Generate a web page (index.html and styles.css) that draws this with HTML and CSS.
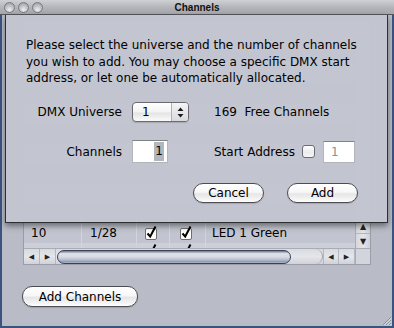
FILE: index.html
```html
<!DOCTYPE html>
<html>
<head>
<meta charset="utf-8">
<link rel="stylesheet" href="styles.css">
</head>
<body>
<div class="window">
  <div class="titlebar">
    <div class="lights"><span class="light"></span><span class="light"></span><span class="light"></span></div>
    <div class="title">Channels</div>
    <div></div>
  </div>
  <div class="body">
    <div class="table">
      <div class="table-main">
        <div class="rows">
          <div class="row head"><span class="c1"></span><span class="c2"></span><span class="c3"></span><span class="c4"></span><span class="c5"></span></div>
          <div class="row"><span class="c1"></span><span class="c2"></span><span class="c3"></span><span class="c4"></span><span class="c5"></span></div>
          <div class="row alt"><span class="c1"></span><span class="c2"></span><span class="c3"></span><span class="c4"></span><span class="c5"></span></div>
          <div class="row"><span class="c1"></span><span class="c2"></span><span class="c3"></span><span class="c4"></span><span class="c5"></span></div>
          <div class="row alt"><span class="c1"></span><span class="c2"></span><span class="c3"></span><span class="c4"></span><span class="c5"></span></div>
          <div class="row"><span class="c1"></span><span class="c2"></span><span class="c3"></span><span class="c4"></span><span class="c5"></span></div>
          <div class="row alt"><span class="c1"></span><span class="c2"></span><span class="c3"></span><span class="c4"></span><span class="c5"></span></div>
          <div class="row"><span class="c1"></span><span class="c2"></span><span class="c3"></span><span class="c4"></span><span class="c5"></span></div>
          <div class="row alt"><span class="c1"></span><span class="c2"></span><span class="c3"></span><span class="c4"></span><span class="c5"></span></div>
          <div class="row"><span class="c1"></span><span class="c2"></span><span class="c3"></span><span class="c4"></span><span class="c5"></span></div>
          <div class="row"><span class="c1">10</span><span class="c2">1/28</span><span class="c3"><svg class="chk" width="14" height="15" viewBox="0 0 14 15"><rect x="1.5" y="3.5" width="11" height="11" rx="1.5" fill="#fdfdfd" stroke="#6e6e6e"/><path d="M3.5 8.5 L6.2 11.5 L11.5 1.5" fill="none" stroke="#000" stroke-width="2"/></svg></span><span class="c4"><svg class="chk" width="14" height="15" viewBox="0 0 14 15"><rect x="1.5" y="3.5" width="11" height="11" rx="1.5" fill="#fdfdfd" stroke="#6e6e6e"/><path d="M3.5 8.5 L6.2 11.5 L11.5 1.5" fill="none" stroke="#000" stroke-width="2"/></svg></span><span class="c5">LED 1 Green</span></div>
          <div class="stub"><div class="row alt"><span class="c1"></span><span class="c2"></span><span class="c3"><svg class="chk" width="14" height="15" viewBox="0 0 14 15"><path d="M3.5 8.5 L6.2 11.5 L11.5 1.5" fill="none" stroke="#000" stroke-width="2"/></svg></span><span class="c4"><svg class="chk" width="14" height="15" viewBox="0 0 14 15"><path d="M3.5 8.5 L6.2 11.5 L11.5 1.5" fill="none" stroke="#000" stroke-width="2"/></svg></span><span class="c5"></span></div></div>
        </div>
        <div class="hscroll">
          <span class="sbtn">&#9664;</span><span class="sbtn">&#9654;</span>
          <div class="htrack"><div class="thumb"></div><div class="trackcap"></div></div>
          <span class="sbtn">&#9664;</span><span class="sbtn">&#9654;</span>
        </div>
      </div>
      <div class="vscroll">
        <div class="vtrack"></div>
        <span class="vbtn">&#9650;</span>
        <span class="vbtn">&#9660;</span>
        <div class="corner"></div>
      </div>
    </div>
    <div class="bottom">
      <button class="btn wide">Add Channels</button>
    </div>
    <svg class="grip" width="12" height="12" viewBox="0 0 12 12"><path d="M11 3 L3 11 M11 6 L6 11 M11 9 L9 11" stroke="#8a8d96" stroke-width="1"/><path d="M11.5 4 L4 11.5 M11.5 7 L7 11.5 M11.5 10 L10 11.5" stroke="#e4e6ec" stroke-width="1"/></svg>
  </div>

  <div class="sheet">
    <p class="msg">Please select the universe and the number of channels you wish to add. You may choose a specific DMX start address, or let one be automatically allocated.</p>
    <div class="form">
      <label class="lbl">DMX Universe</label>
      <div class="popup"><span class="pval">1</span><span class="pstep"><svg width="7" height="11" viewBox="0 0 7 11"><path d="M3.5 0.5 L6.5 4 L0.5 4 Z M0.5 7 L6.5 7 L3.5 10.5 Z" fill="#1a1a1a"/></svg></span></div>
      <div class="free">169  Free Channels</div>
      <label class="lbl">Channels</label>
      <div class="field num"><span class="sel">1</span></div>
      <div class="start">
        <span>Start Address</span>
        <span class="check"></span>
        <span class="field dis">1</span>
      </div>
    </div>
    <div class="actions">
      <button class="btn">Cancel</button>
      <button class="btn">Add</button>
    </div>
  </div>
</div>
</body>
</html>
```

FILE: styles.css
```css
* { box-sizing: border-box; }
html, body { margin: 0; padding: 0; }
body {
  width: 394px;
  height: 328px;
  overflow: hidden;
  font-family: "DejaVu Sans", sans-serif;
  font-size: 12px;
  color: #000;
  background: #b9bcc7;
}
.window {
  position: relative;
  width: 394px;
  height: 328px;
  display: flex;
  flex-direction: column;
  background: #b9bcc7;
}
.titlebar {
  flex: none;
  height: 15px;
  display: grid;
  grid-template-columns: 1fr auto 1fr;
  align-items: center;
  background: linear-gradient(#cfd0d4, #b0b2b8 60%, #a5a7ad);
  border-bottom: 1px solid #55575d;
}
.lights { display: flex; gap: 3px; padding-left: 4px; }
.light {
  width: 11px;
  height: 11px;
  border-radius: 50%;
  border: 1px solid #7a7b80;
  background: radial-gradient(circle at 50% 75%, #eeeef0 0, #c9cacf 40%, #94969c 100%);
}
.title {
  font-family: "Liberation Sans", sans-serif;
  font-weight: bold;
  font-size: 10px;
  color: #111;
}
.body {
  flex: 1;
  position: relative;
  display: flex;
  flex-direction: column;
  border: 2px solid #3a5480;
  border-top: 0;
  padding: 5px 21px 0 21px;
}
.table {
  display: flex;
  height: 245px;
  border: 1px solid #9a9da7;
  background: #c1c4ce;
}
.table-main { flex: 1; display: flex; flex-direction: column; min-width: 0; }
.rows {
  flex: 1;
  overflow: hidden;
  display: flex;
  flex-direction: column;
  justify-content: flex-end;
}
.row {
  flex: none;
  height: 20px;
  display: grid;
  grid-template-columns: 58px 55px 33px 36px 1fr;
  align-items: center;
  background: #c2c5cf;
}
.row.alt { background: #cbced7; }
.row.head { height: 22px; background: #d4d6dd; }
.row > span { height: 100%; display: flex; align-items: center; border-right: 1px solid #d3d5dc; }
.row > span:last-child { border-right: 0; }
.c1 { padding-left: 7px; }
.c2 { padding-left: 8px; }
.c3 { padding-left: 7px; }
.c4 { padding-left: 9px; }
.c5 { padding-left: 6px; }
.chk { display: block; margin-top: -2px; }
.stub { flex: none; height: 5px; overflow: hidden; }
.stub .row { background: #cdd0d8; }
.stub .row > span { align-items: flex-start; }
.stub .chk { margin-top: 0; }

.hscroll {
  flex: none;
  height: 16px;
  display: flex;
  background: linear-gradient(#d8dae0, #e4e6eb 50%, #d0d2d9);
  border-top: 1px solid #a9acb5;
}
.sbtn {
  flex: none;
  width: 16px;
  display: flex;
  align-items: center;
  justify-content: center;
  font-size: 7px;
  color: #222;
  border-right: 1px solid #b4b7c0;
}
.sbtn:nth-last-child(2) { border-left: 1px solid #b4b7c0; }
.htrack {
  flex: 1;
  display: flex;
  align-items: center;
  padding-left: 1px;
}
.thumb {
  width: 234px;
  height: 14px;
  border: 1px solid #3b4257;
  border-radius: 7px;
  background: linear-gradient(#6f7689 0, #dfe2ea 22%, #d6dae4 50%, #b3bbcd 75%, #8e98b3 90%, #b4bbcc 100%);
}
.trackcap {
  flex: 1;
  align-self: stretch;
  border-right: 1px solid #9ea2ad;
  border-radius: 0 8px 8px 0;
}
.vscroll {
  flex: none;
  width: 15px;
  display: flex;
  flex-direction: column;
  border-left: 1px solid #a9acb5;
  background: linear-gradient(90deg, #d5d7de, #e3e5ea 50%, #cfd1d8);
}
.vtrack { flex: 1; }
.vbtn {
  flex: none;
  height: 15px;
  display: flex;
  align-items: center;
  justify-content: center;
  font-size: 8px;
  color: #222;
  border-top: 1px solid #b4b7c0;
}
.corner { flex: none; height: 16px; border-top: 1px solid #a9acb5; background: #d3d5dc; }

.bottom { display: flex; padding-top: 21px; margin-left: -1px; }
.btn {
  font-family: "DejaVu Sans", sans-serif;
  font-size: 12px;
  color: #000;
  height: 20px;
  padding: 0;
  border: 1px solid #4b4d52;
  border-radius: 10px;
  background: linear-gradient(#ffffff 0, #f7f7f7 45%, #e6e6e6 55%, #f4f4f4 85%, #ffffff 100%);
  box-shadow: 0 1px 1px rgba(0,0,0,0.15);
  line-height: 18px;
}
.btn.wide { width: 116px; height: 21px; }
.grip { position: absolute; right: 0; bottom: 0; }

.sheet {
  position: absolute;
  top: 15px;
  left: 5px;
  width: 383px;
  padding: 22px 29px 19px 20px;
  background: rgba(194, 197, 208, 0.97);
  border: 1px solid #2e2f33;
  border-top: 0;
  box-shadow: 0 3px 6px rgba(0,0,0,0.45);
}
.msg { margin: 0; line-height: 16.5px; }
.form {
  margin-top: 15.5px;
  display: grid;
  grid-template-columns: 106px 82px 1fr;
  grid-template-rows: 20px 23px;
  row-gap: 18px;
  align-items: center;
}
.lbl { text-align: right; padding-right: 10px; }
.popup {
  width: 57px;
  height: 20px;
  display: flex;
  border: 1px solid #6a6b70;
  border-radius: 4px;
  background: linear-gradient(#ffffff, #f4f4f4 50%, #e4e4e4 55%, #fafafa);
  box-shadow: 0 1px 1px rgba(0,0,0,0.15);
}
.pval { flex: 1; padding-left: 9px; line-height: 18px; }
.pstep {
  width: 17px;
  display: flex;
  align-items: center;
  justify-content: center;
  border-left: 1px solid #b0b1b5;
  background: linear-gradient(#f4f4f6, #d9dade);
  border-radius: 0 3px 3px 0;
}
.free { white-space: pre; }
.field {
  height: 23px;
  background: #fff;
  border: 1px solid #b3b5ba;
  border-top-color: #808288;
  display: flex;
  align-items: center;
}
.field.num { width: 36px; justify-content: flex-end; padding-right: 3px; }
.sel { background: #b4b6bd; padding: 0 1px; line-height: 19px; }
.start { display: flex; align-items: center; }
.check {
  width: 13px;
  height: 13px;
  margin-left: 7px;
  border: 1px solid #6c6d72;
  border-radius: 3px;
  background: linear-gradient(#ffffff, #ececec 55%, #f7f7f7);
}
.field.dis { width: 32px; height: 22px; margin-left: 8px; padding-left: 7px; color: #8d8f94; }
.actions {
  margin-top: 20px;
  display: flex;
  justify-content: flex-end;
  gap: 23px;
}
.actions .btn { width: 71px; }
```
